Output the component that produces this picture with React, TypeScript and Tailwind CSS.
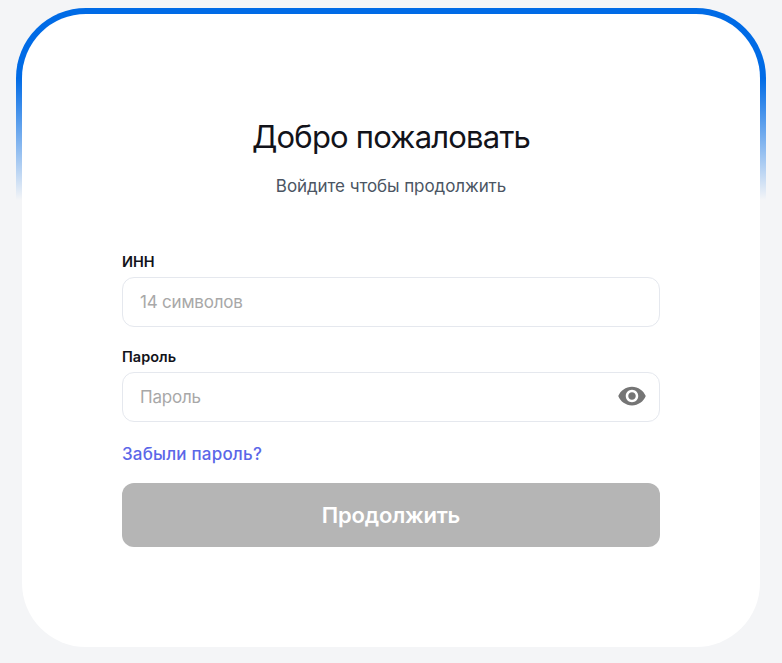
import { useState } from 'react';

function EyeIcon() {
  return (
    <svg width="30" height="30" viewBox="0 0 24 24" fill="#757575">
      <path d="M12 4.5C7 4.5 2.73 7.61 1 12c1.73 4.39 6 7.5 11 7.5s9.27-3.11 11-7.5c-1.73-4.39-6-7.5-11-7.5zM12 17c-2.76 0-5-2.24-5-5s2.24-5 5-5 5 2.24 5 5-2.24 5-5 5zm0-8c-1.66 0-3 1.34-3 3s1.34 3 3 3 3-1.34 3-3-1.34-3-3-3z" />
    </svg>
  );
}

export default function App() {
  const [inn, setInn] = useState('');
  const [password, setPassword] = useState('');
  const [show, setShow] = useState(false);

  return (
    <div className="h-[663px] overflow-hidden bg-[#f4f5f7] pt-2 pl-4 pr-4 font-['Inter',sans-serif]">
      <div className="w-[750px] rounded-[70px] bg-[linear-gradient(180deg,#006be6_0px,#006be6_70px,rgba(0,107,230,0)_192px)] px-[6px] pt-[6px]">
        <div className="flex h-[633px] w-[738px] flex-col items-center rounded-[64px] bg-white pt-[103px]">
          <h1 className="text-[31px] leading-[40px] font-normal tracking-[-0.8px] text-[#12131a]">Добро пожаловать</h1>
          <p className="mt-[17px] text-[17px] leading-[24px] tracking-[-0.08px] text-[#4b5563]">Войдите чтобы продолжить</p>

          <form className="mt-[54px] flex w-[538px] flex-col" onSubmit={e => e.preventDefault()}>
            <label className="text-[14.5px] leading-[20px] font-semibold text-[#12131a]">ИНН</label>
            <input
              type="text"
              placeholder="14 символов"
              className="mt-[5px] h-[50px] rounded-xl border border-[#e5e8ee] px-[17px] text-[17px] tracking-[-0.2px] outline-none placeholder:text-[#a8a8a8]"
              value={inn}
              onChange={e => setInn(e.target.value)}
            />

            <label className="mt-[20px] text-[14.5px] leading-[20px] font-semibold text-[#12131a]">Пароль</label>
            <div className="relative mt-[5px]">
              <input
                type={show ? 'text' : 'password'}
                placeholder="Пароль"
                className="h-[50px] w-full rounded-xl border border-[#e5e8ee] px-[17px] text-[17px] tracking-[-0.2px] outline-none placeholder:text-[#a8a8a8]"
                value={password}
                onChange={e => setPassword(e.target.value)}
              />
              <button type="button" onClick={() => setShow(!show)} className="absolute top-[9px] right-[13px]">
                <EyeIcon />
              </button>
            </div>

            <a href="#" className="mt-[20px] text-[17px] leading-[24px] font-medium tracking-[0.2px] text-[#5b67e8]">Забыли пароль?</a>

            <button type="submit" className="mt-[17px] h-[64px] rounded-xl bg-[#b5b5b5] text-[22px] font-semibold tracking-[-0.2px] text-white">
              Продолжить
            </button>
          </form>
        </div>
      </div>
    </div>
  );
}
